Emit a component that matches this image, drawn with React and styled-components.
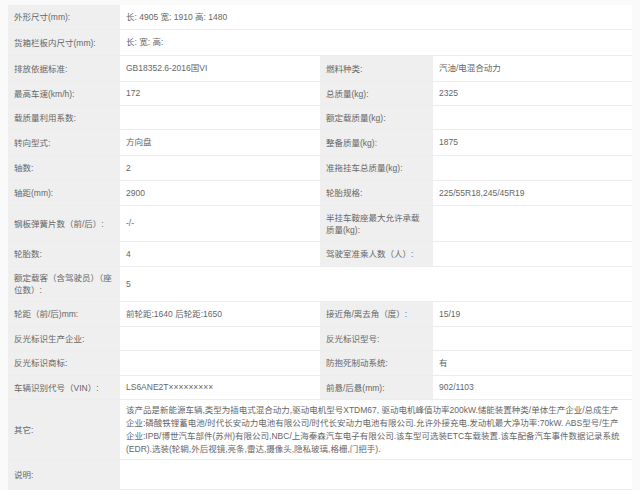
import React from 'react';
import styled, { createGlobalStyle } from 'styled-components';

const Global = createGlobalStyle`
  * { box-sizing: border-box; }
  body { margin: 0; background: #fafafa; font-family: "Liberation Sans", "Noto Sans CJK SC", sans-serif; }
`;

const rows = [
  { h: 25, cells: ['外形尺寸(mm):', '长: 4905 宽: 1910 高: 1480'] },
  { h: 26, cells: ['货箱栏板内尺寸(mm):', '长:  宽:  高:'] },
  { h: 26, cells: ['排放依据标准:', 'GB18352.6-2016国VI', '燃料种类:', '汽油/电混合动力'] },
  { h: 24, cells: ['最高车速(km/h):', '172', '总质量(kg):', '2325'] },
  { h: 24, cells: ['载质量利用系数:', '', '额定载质量(kg):', ''] },
  { h: 26, cells: ['转向型式:', '方向盘', '整备质量(kg):', '1875'] },
  { h: 25, cells: ['轴数:', '2', '准拖挂车总质量(kg):', ''] },
  { h: 25, cells: ['轴距(mm):', '2900', '轮胎规格:', '225/55R18,245/45R19'] },
  { h: 36, cells: ['钢板弹簧片数（前/后）:', '-/-', '半挂车鞍座最大允许承载质量(kg):', ''] },
  { h: 25, cells: ['轮胎数:', '4', '驾驶室准乘人数（人）:', ''] },
  { h: 35, cells: ['额定载客（含驾驶员）（座位数）:', '5'] },
  { h: 25, cells: ['轮距（前/后)mm:', '前轮距:1640 后轮距:1650', '接近角/离去角（度）:', '15/19'] },
  { h: 24, cells: ['反光标识生产企业:', '', '反光标识型号:', ''] },
  { h: 25, cells: ['反光标识商标:', '', '防抱死制动系统:', '有'] },
  { h: 24, cells: ['车辆识别代号（VIN）:', 'LS6ANE2T×××××××××', '前悬/后悬(mm):', '902/1103'] },
  { h: 60, cells: ['其它:', '该产品是新能源车辆,类型为插电式混合动力,驱动电机型号XTDM67, 驱动电机峰值功率200kW.储能装置种类/单体生产企业/总成生产企业:磷酸铁锂蓄电池/时代长安动力电池有限公司/时代长安动力电池有限公司.允许外接充电.发动机最大净功率:70kW. ABS型号/生产企业:IPB/博世汽车部件(苏州)有限公司,NBC/上海秦森汽车电子有限公司.该车型可选装ETC车载装置.该车配备汽车事件数据记录系统(EDR).选装(轮辋,外后视镜,亮条,雷达,摄像头,隐私玻璃,格栅,门把手).'] },
  { h: 30, cells: ['说明:', ''] },
];

const Table = styled.div`
  margin: 5px 8px 0 8px;
  display: flex;
  flex-direction: column;
`;

const Row = styled.div`
  display: grid;
  grid-template-columns: ${p => (p.$full ? '112px 1fr' : '112px 200px 113px 1fr')};
  min-height: ${p => p.$h}px;
  border-bottom: 1px solid #ececec;
`;

const Label = styled.div`
  background: #efefef;
  color: #666;
  font-size: 8.5px;
  line-height: 12px;
  padding: 0 6px;
  display: flex;
  align-items: center;
`;

const Value = styled.div`
  background: #fff;
  color: #666;
  font-size: 8.5px;
  line-height: 13px;
  padding: 0 6px;
  display: flex;
  align-items: center;
`;

export default function App() {
  return (
    <>
      <Global />
      <Table>
        {rows.map((r, i) => (
          <Row key={i} $h={r.h} $full={r.cells.length === 2}>
            {r.cells.map((c, j) =>
              j % 2 === 0 ? <Label key={j}>{c}</Label> : <Value key={j}>{c}</Value>
            )}
          </Row>
        ))}
      </Table>
    </>
  );
}
